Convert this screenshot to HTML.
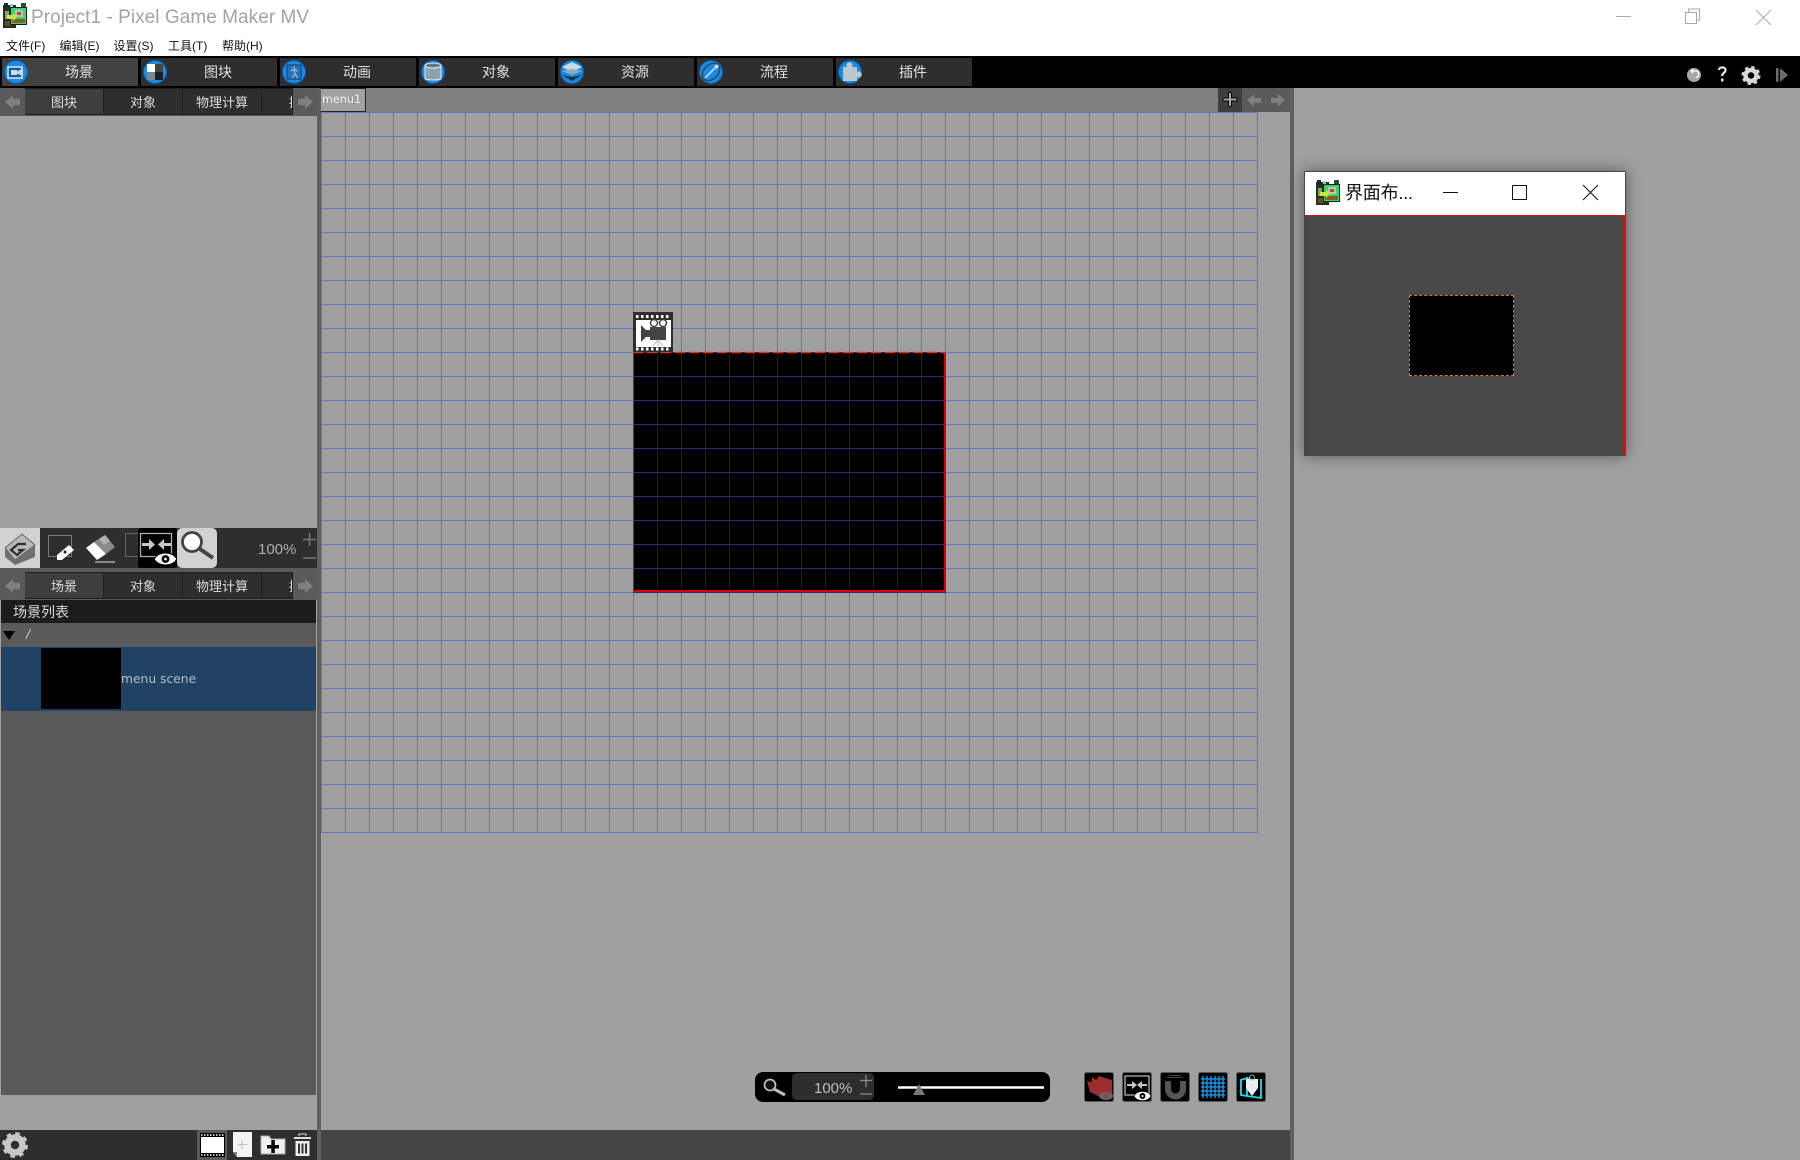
<!DOCTYPE html>
<html lang="zh-CN"><head><meta charset="utf-8"><title>Project1 - Pixel Game Maker MV</title>
<style>
html,body{margin:0;padding:0;width:1800px;height:1160px;overflow:hidden;background:#a0a0a0}
body{position:relative;font-family:"Liberation Sans","Noto Sans CJK SC",sans-serif}
.a{position:absolute}
.t{position:absolute;white-space:nowrap;line-height:1}
.btn{position:absolute;top:58px;width:136px;height:28px;background:#2e2e2e}
.btn span{position:absolute;left:18px;right:0;top:6px;text-align:center;font-size:14px;letter-spacing:0;line-height:16px;color:#e2e2e2}
.tab{position:absolute;height:27px;background:#2e2e2e;border:1px solid #1e1e1e;border-left:0;box-sizing:border-box;overflow:hidden;text-align:center;font-size:13px;line-height:27px;color:#dcdcdc}
.tab.on{background:#3e3e3e}
.m{position:absolute;top:39px;font-size:12px;line-height:14px;color:#111}
</style></head><body>

<!-- base regions -->
<div class="a" style="left:0;top:0;width:1800px;height:56px;background:#fff"></div>
<div class="a" style="left:0;top:56px;width:1800px;height:32px;background:#000"></div>
<div class="a" style="left:0;top:88px;width:317px;height:1072px;background:#a0a0a0"></div>
<div class="a" style="left:317px;top:88px;width:4px;height:1072px;background:#5f5f5f"></div>
<div class="a" style="left:1290px;top:88px;width:4px;height:1072px;background:#5f5f5f"></div>
<div class="a" style="left:321px;top:88px;width:897px;height:24px;background:#808080"></div>
<div class="a" style="left:1218px;top:88px;width:24px;height:24px;background:#3e3e3e"></div>
<div class="a" style="left:1242px;top:88px;width:48px;height:24px;background:#5a5a5a"></div>

<!-- title -->
<div class="t" style="left:31px;top:7px;font-size:19px;line-height:22px;color:#a3a3a3;letter-spacing:.05px">Project1 - Pixel Game Maker MV</div>
<div class="m" style="left:6px">文件(F)</div>
<div class="m" style="left:59.500px">编辑(E)</div>
<div class="m" style="left:113.500px">设置(S)</div>
<div class="m" style="left:168px">工具(T)</div>
<div class="m" style="left:222px">帮助(H)</div>

<!-- main toolbar -->
<div class="btn" style="left:2px;background:#424242"><span>场景</span></div>
<div class="btn" style="left:141px"><span>图块</span></div>
<div class="btn" style="left:280px"><span>动画</span></div>
<div class="btn" style="left:419px"><span>对象</span></div>
<div class="btn" style="left:558px"><span>资源</span></div>
<div class="btn" style="left:697px"><span>流程</span></div>
<div class="btn" style="left:836px"><span>插件</span></div>

<!-- left sub tab strip 1 -->
<div class="a" style="left:0;top:88px;width:317px;height:28px;background:#5a5a5a"></div>
<div class="tab on" style="left:25px;top:88px;width:79px">图块</div>
<div class="tab" style="left:104px;top:88px;width:79px">对象</div>
<div class="tab" style="left:183px;top:88px;width:79px">物理计算</div>
<div class="tab" style="left:262px;top:88px;width:31px;text-align:left;text-indent:27px">插件</div>
<div class="a" style="left:293px;top:88px;width:24px;height:28px;background:#5a5a5a"></div>

<!-- tool row -->
<div class="a" style="left:0;top:528px;width:317px;height:40px;background:#2e2e2e"></div>
<div class="a" style="left:0;top:528px;width:40px;height:40px;background:#d2d2d2"></div>
<div class="t" style="left:258px;top:541px;font-size:15px;line-height:17px;color:#a9b1b8">100%</div>

<!-- left sub tab strip 2 -->
<div class="a" style="left:0;top:568px;width:317px;height:32px;background:#5a5a5a"></div>
<div class="tab on" style="left:25px;top:572px;width:79px">场景</div>
<div class="tab" style="left:104px;top:572px;width:79px">对象</div>
<div class="tab" style="left:183px;top:572px;width:79px">物理计算</div>
<div class="tab" style="left:262px;top:572px;width:31px;text-align:left;text-indent:27px">插件</div>
<div class="a" style="left:293px;top:572px;width:24px;height:28px;background:#5a5a5a"></div>

<!-- list -->
<div class="a" style="left:1px;top:600px;width:315px;height:23px;background:#1c1c1c"></div>
<div class="t" style="left:13px;top:604px;font-size:14px;line-height:16px;color:#dcdcdc">场景列表</div>
<div class="a" style="left:1px;top:623px;width:315px;height:472px;background:#5a5a5a"></div>
<div class="t" style="left:26px;top:627px;font-size:14px;line-height:15px;font-style:italic;color:#c4d0dc">/</div>
<div class="a" style="left:1px;top:647px;width:315px;height:64px;background:#1f4265"></div>
<div class="a" style="left:41px;top:648px;width:80px;height:61px;background:#000"></div>
<div class="t" style="left:121px;top:671px;font-family:'DejaVu Sans',sans-serif;font-size:12.300px;line-height:16px;color:#b4bcc4">menu scene</div>

<!-- left bottom -->
<div class="a" style="left:0;top:1130px;width:317px;height:30px;background:#2e2e2e"></div>
<div class="a" style="left:197px;top:1130px;width:30px;height:30px;background:#5a5a5a"></div>

<!-- canvas tab -->
<div class="a" style="left:321px;top:88px;width:45px;height:24px;box-sizing:border-box;background:#a0a0a0;border:1px solid #222;border-left-width:0"></div>
<div class="t" style="left:322px;top:92px;font-family:'DejaVu Sans',sans-serif;font-size:11.200px;line-height:15px;color:#f0f0f0">menu1</div>

<!-- canvas grid -->
<div class="a" style="left:321px;top:112px;width:937px;height:721px;background-image:linear-gradient(to bottom,#6676c6 1px,transparent 1px),linear-gradient(to right,#6a78a8 1px,transparent 1px);background-size:24px 24px"></div>
<div class="a" style="left:633px;top:352px;width:313px;height:241px;background-color:#000;background-image:linear-gradient(to bottom,#1f2f78 1px,transparent 1px),linear-gradient(to right,#1a2040 1px,transparent 1px);background-size:24px 24px"></div>

<!-- bottom canvas bar -->
<div class="a" style="left:321px;top:1130px;width:969px;height:30px;background:#444"></div>
<div class="a" style="left:755px;top:1072px;width:295px;height:30px;border-radius:8px;background:#000"></div>
<div class="a" style="left:792px;top:1073px;width:82px;height:27px;border-radius:5px;background:#2e2e2e"></div>
<div class="t" style="left:814px;top:1080px;font-size:15px;line-height:17px;color:#b6bec6">100%</div>

<!-- floating window -->
<div class="a" style="left:1304px;top:171px;width:322px;height:285px;background:#484848;box-shadow:0 0 14px rgba(0,0,0,.45)"></div>
<div class="a" style="left:1305px;top:172px;width:320px;height:43px;background:#fff"></div>
<div class="a" style="left:1305px;top:215px;width:320px;height:1px;background:#f00000"></div>
<div class="a" style="left:1305px;top:215px;width:1px;height:240px;background:#e00000"></div>
<div class="a" style="left:1624px;top:215px;width:2px;height:240px;background:#ff0000"></div>
<div class="t" style="left:1345px;top:183px;font-size:18px;line-height:21px;color:#111;letter-spacing:-.2px">界面布...</div>
<div class="a" style="left:1409px;top:295px;width:105px;height:81px;box-sizing:border-box;background:#000;border:1px dashed #e87a10"></div>

<!-- all icons -->
<svg class="a" style="left:0;top:0" width="1800" height="1160" viewBox="0 0 1800 1160" xmlns="http://www.w3.org/2000/svg" fill="none">
<!-- app icon -->
<g transform="translate(3,3)">
<rect x="0" y="2" width="13" height="23" fill="#26301f"/><rect x="1" y="0" width="4" height="5" fill="#1c2a30"/><rect x="7" y="1" width="3" height="4" fill="#9cc4d8"/><rect x="18" y="0" width="5" height="5" fill="#33454f"/>
<rect x="2" y="8" width="4" height="8" fill="#8da070"/><rect x="2" y="18" width="6" height="5" fill="#6a4a2c"/>
<rect x="7" y="4" width="17" height="18" fill="#0c2412"/><rect x="8" y="5" width="15" height="16" fill="#35d868"/><rect x="12" y="7" width="8" height="7" fill="#c8c0b8"/><rect x="14" y="9" width="4" height="3" fill="#a8503a"/><rect x="9" y="16" width="13" height="4" fill="#8a5a2a"/>
<path d="M4 12h6v-2l4 4-4 4v-2H4z" fill="#c8e838"/>
</g>
<g transform="translate(1316,180)">
<rect x="0" y="2" width="13" height="23" fill="#26301f"/><rect x="1" y="0" width="4" height="5" fill="#1c2a30"/><rect x="7" y="1" width="3" height="4" fill="#9cc4d8"/><rect x="18" y="0" width="5" height="5" fill="#33454f"/>
<rect x="2" y="8" width="4" height="8" fill="#8da070"/><rect x="2" y="18" width="6" height="5" fill="#6a4a2c"/>
<rect x="7" y="4" width="17" height="18" fill="#0c2412"/><rect x="8" y="5" width="15" height="16" fill="#35d868"/><rect x="12" y="7" width="8" height="7" fill="#c8c0b8"/><rect x="14" y="9" width="4" height="3" fill="#a8503a"/><rect x="9" y="16" width="13" height="4" fill="#8a5a2a"/>
<path d="M4 12h6v-2l4 4-4 4v-2H4z" fill="#c8e838"/>
</g>
<!-- window controls -->
<path d="M1616 16.500h15" stroke="#a8a8a8"/>
<path d="M1685.500 12.500h11v11h-11zM1688.500 12v-3h11v11h-3" stroke="#a8a8a8"/>
<path d="M1756 10l15 15M1771 10l-15 15" stroke="#a8a8a8"/>

<!-- toolbar round icons -->
<g stroke="#0d5fa8" fill="#1a8ae8"><circle cx="16" cy="72" r="11.500"/><circle cx="155" cy="72" r="11.500"/><circle cx="294" cy="72" r="11.500"/><circle cx="433" cy="72" r="11.500"/><circle cx="572" cy="72" r="11.500"/><circle cx="711" cy="72" r="11.500"/><circle cx="850" cy="72" r="11.500"/></g>
<!-- scene -->
<rect x="8" y="67" width="14" height="11" fill="#0e5c9e" stroke="#d8e8f4" stroke-width="1.500"/><path d="M11 70h6v5h-6zM17 71.500l6-3.500v8l-6-2.500z" fill="#c8dcec"/>
<!-- block -->
<rect x="147" y="64" width="8" height="8" fill="#fff"/><rect x="155" y="64" width="8" height="8" fill="#444"/><rect x="147" y="72" width="8" height="8" fill="#7c8890"/><rect x="155" y="72" width="8" height="8" fill="#14222c"/>
<!-- anim -->
<rect x="287" y="65" width="14" height="14" fill="#2770b8" stroke="#0e3f70"/><path d="M294 66v3M291 71l3-2 4 2M294 69l1 5-3 4M295 74l3 4" stroke="#8fb4d4" stroke-width="1.400"/>
<!-- object -->
<path d="M425 65.500h16v13c0 2-16 2-16 0z" fill="#8ca2ae" stroke="#e4ecf2"/><ellipse cx="433" cy="65.500" rx="8" ry="2.500" fill="#5e7888" stroke="#e4ecf2"/>
<!-- resource -->
<path d="M572 62l10 5-10 5-10-5z" fill="#c6dcec"/><path d="M562 71l10 4 10-4-10-2z" fill="#90a8b8"/><path d="M562 75l10 6 10-6-10 2z" fill="#1f3240"/>
<!-- flow -->
<ellipse cx="711" cy="72" rx="10" ry="7" transform="rotate(-45 711 72)" stroke="#34495c" stroke-width="1.500"/><path d="M705 78l11-11" stroke="#e8e8e8" stroke-width="1.300"/><circle cx="716.500" cy="66.500" r="2" fill="#d0d8e0"/>
<!-- plugin -->
<path d="M843 67h4a3 3 0 1 1 5 0h5v5a3 3 0 1 1 0 5v4h-14z" fill="#bcc8d0"/>

<!-- toolbar right icons -->
<circle cx="1694" cy="75" r="7" fill="#a8a8a8"/><path d="M1691 71h4a3 3 0 0 1 1 6.500M1691 71l2-2M1691 71l2 2" stroke="#fff" stroke-width="1.300"/>
<path d="M1719 70c0-3.500 6.500-3.500 6.500 0 0 3-3.500 3-3.500 6" stroke="#e4e4e4" stroke-width="2.200"/><rect x="1721" y="78.500" width="2.500" height="3" fill="#e4e4e4"/>
<circle cx="1751" cy="75.500" r="8.300" stroke="#d8d8d8" stroke-width="2.500" stroke-dasharray="3.300 3.220"/><circle cx="1751" cy="75.500" r="5.500" stroke="#d8d8d8" stroke-width="4.500"/>
<rect x="1776" y="68" width="2.500" height="14" fill="#6c6c6c"/><path d="M1780 68l8 7-8 7z" fill="#6c6c6c"/>

<!-- sub tab arrows -->
<g fill="#808080"><path d="M5 102l8-7v4h7v6h-7v4zM313 102l-8-7v4h-7v6h7v4zM5 586l8-7v4h7v6h-7v4zM313 586l-8-7v4h-7v6h7v4z"/></g>
<path d="M1247 100l7-6v4h7v5h-7v4zM1285 100l-7-6v4h-7v5h7v4z" fill="#808080"/>

<!-- plus -->
<path d="M1230 92v15M1222.500 99.500h15" stroke="#000" stroke-width="4"/><path d="M1230 93v13M1223.500 99.500h13" stroke="#a8a8a8" stroke-width="2"/>

<!-- tool row icons -->
<path d="M5 548l17-14 13 11v12l-20 8-10-8z" fill="#707070"/><path d="M22 534l13 11-20 15-10-12z" fill="#b8b8b8" stroke="#666"/>
<path d="M26 544h-8l-7 6 6 5 6-5h-5" stroke="#2e2e2e" stroke-width="2.200"/>
<rect x="48.500" y="535.500" width="23" height="21" stroke="#777"/><path d="M57 555l12-10 5 5-12 10h-5z" fill="#fff"/><circle cx="65" cy="552" r="1.500" fill="#222"/>
<path d="M94 542l11-7 10 12-9 7z" fill="#8a8a8a"/><path d="M99 539l6-4 5 6-6 4z" fill="#b0b0b0"/><path d="M86 548l8-6 12 12-9 6z" fill="#fff"/><path d="M95 562h20" stroke="#aaa" stroke-width="1.500"/>
<rect x="125.500" y="533.500" width="14" height="23" stroke="#666"/>
<rect x="138" y="528" width="39" height="40" rx="3" fill="#000"/>
<path d="M140.500 533.500h31v23h-31z" stroke="#b0b0b0" stroke-width="1.300"/>
<path d="M142 543h7v-4l6 5.500-6 5.500v-4h-7zM171 543h-7v-4l-6 5.500 6 5.500v-4h7z" fill="#c8c8c8"/>
<path d="M154 559c5-8 18-8 23 0-5 8-18 8-23 0z" fill="#fff" stroke="#000"/><circle cx="165.500" cy="559" r="4" fill="#111"/><circle cx="165.500" cy="559" r="1.300" fill="#fff"/>
<rect x="177" y="528" width="40" height="40" rx="5" fill="#d2d2d2"/>
<circle cx="192" cy="542" r="9.500" fill="#fff" stroke="#444" stroke-width="2.800"/><path d="M200 549l13 9" stroke="#444" stroke-width="4"/>
<path d="M303 539.500h13M309.500 533v13M303 558h13" stroke="#777" stroke-width="1.500"/>

<!-- list triangle -->
<path d="M3 631h12l-6 9z" fill="#000"/>

<!-- left bottom icons -->
<circle cx="15" cy="1145" r="11.500" stroke="#c8c8c8" stroke-width="3" stroke-dasharray="4.500 4.530"/><circle cx="15" cy="1145" r="7.500" stroke="#c8c8c8" stroke-width="6.500"/>
<rect x="200" y="1133" width="25" height="24" fill="#000"/><rect x="201" y="1137" width="23" height="16" fill="#fff"/>
<path d="M201 1135h23M201 1155h23" stroke="#fff" stroke-width="1.500" stroke-dasharray="1.500 1.500"/>
<path d="M233 1132h19v25h-15l-4-5z" fill="#f4f4f4"/><path d="M233 1152l4 0v5z" fill="#888"/><path d="M242 1140v9M238 1144.500h9" stroke="#bbb"/>
<path d="M261 1136h8l2 3h14v15h-24z" fill="#f0f0f0" stroke="#aaa"/><rect x="267" y="1145" width="12" height="3.500" fill="#000"/><rect x="271.300" y="1140" width="3.500" height="13" fill="#000"/>
<rect x="294" y="1137" width="17" height="2" fill="#ddd"/><path d="M299 1136v-2h7v2" stroke="#ddd"/>
<path d="M295.500 1141h14v15h-14z" fill="#ededed"/><path d="M299 1143.500v10M302.500 1143.500v10M306 1143.500v10" stroke="#333" stroke-width="2"/>

<!-- black rect red border -->
<path d="M633.500 352v240" stroke="#e00000"/><path d="M633 591h313" stroke="#e00000" stroke-width="2"/><path d="M945 352v240" stroke="#e00000" stroke-width="2"/>
<path d="M633 352.500h313" stroke="#f03000" stroke-width="1.500" stroke-dasharray="10 4"/>

<!-- camera icon -->
<rect x="633" y="312" width="40" height="40" fill="#2e2e2e"/>
<rect x="636" y="320" width="35" height="27" fill="#fff"/>
<path d="M636 316.500h35M636 349h35" stroke="#fff" stroke-width="3" stroke-dasharray="2.500 2.500"/>
<path d="M641 325l5 5h4v-3h16v13h-16v-3h-4l-5 5z" fill="#444"/>
<circle cx="654" cy="323" r="3.500" fill="#fff" stroke="#444" stroke-width="1.500"/><circle cx="663" cy="323" r="3.500" fill="#fff" stroke="#444" stroke-width="1.500"/>
<path d="M658 340l-5 6M658 340l5 6M658 340v6" stroke="#bbb"/>

<!-- bottom zoom bar -->
<circle cx="770" cy="1085" r="5.500" stroke="#bdbdbd" stroke-width="1.800" fill="#111"/><path d="M774 1089l11 6" stroke="#bdbdbd" stroke-width="3"/>
<path d="M860 1080.500h12M866 1075v12M860 1094h12" stroke="#8a8a8a" stroke-width="1.300"/>
<path d="M898 1087.500h146" stroke="#fff" stroke-width="2.500"/><path d="M919 1084l6 11h-12z" fill="#777"/>

<!-- bottom toggle icons -->
<g fill="#000" stroke="#5a5a5a"><rect x="1084.500" y="1072.500" width="29" height="29" rx="2"/><rect x="1122.500" y="1072.500" width="29" height="29" rx="2"/><rect x="1160.500" y="1072.500" width="29" height="29" rx="2"/><rect x="1198.500" y="1072.500" width="29" height="29" rx="2"/><rect x="1236.500" y="1072.500" width="29" height="29" rx="2"/></g>
<path d="M1087 1081l5 1v-5l4 3 3-4 13 4v14l-8 1-3 2-3-1-8-4-2-7z" fill="#9e2c2c"/><ellipse cx="1106" cy="1096" rx="7" ry="4" fill="#666"/><circle cx="1106" cy="1096" r="1.800" stroke="#9e2c2c"/>
<path d="M1125 1076h24v19h-24z" stroke="#b8b8b8" stroke-width="1.300"/><path d="M1127 1084h5v-3l5 4-5 4v-3h-5zM1147 1084h-5v-3l-5 4 5 4v-3h5z" fill="#c4c4c4"/>
<path d="M1134 1096c3-6 14-6 17 0-3 6-14 6-17 0z" fill="#fff" stroke="#000" stroke-width=".6"/><circle cx="1142.500" cy="1096" r="3" fill="#000"/><circle cx="1142.500" cy="1096" r="1" fill="#fff"/>
<path d="M1168 1081v8a7.500 7.500 0 0 0 15 0v-8" stroke="#555" stroke-width="6"/><path d="M1167 1077.500h16M1169 1075.500h12" stroke="#444"/>
<g stroke="#1c8fdc" stroke-width="1.500"><path d="M1203 1076v22M1207 1076v22M1211 1076v22M1215 1076v22M1219 1076v22M1223 1076v22M1201 1079h24M1201 1083h24M1201 1087h24M1201 1091h24M1201 1095h24"/></g>
<path d="M1241 1080l6-2v18l-6-1zM1247 1078l5 2M1261 1079v19l-14-2" stroke="#18e0f0" stroke-width="1.800"/>
<path d="M1246 1079h12v9l-6 8-6-8z" fill="#eee"/><circle cx="1252" cy="1077.500" r="2.500" stroke="#aaa"/>

<!-- floating window controls -->
<path d="M1443 192.500h15" stroke="#111"/>
<rect x="1512.500" y="185.500" width="14" height="14" stroke="#111"/>
<path d="M1583 185l15 15M1598 185l-15 15" stroke="#111"/>
</svg>
</body></html>
